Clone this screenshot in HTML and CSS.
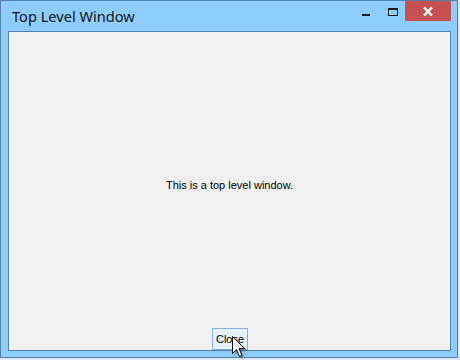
FILE: index.html
```html
<!DOCTYPE html>
<html>
<head>
<meta charset="utf-8">
<link rel="stylesheet" href="styles.css">
</head>
<body>
<div class="window">
  <div class="titlebar">
    <div class="title">Top Level Window</div>
    <div class="controls">
      <div class="btn-min"><span class="dash"></span></div>
      <div class="btn-max"><span class="box"></span></div>
      <div class="btn-close">
        <svg width="10" height="9" viewBox="0 0 10 9"><path d="M1 0.5 L9 8.5 M9 0.5 L1 8.5" stroke="#fff" stroke-width="2.4" fill="none"/></svg>
      </div>
    </div>
  </div>
  <div class="client">
    <div class="label-area"><span class="label">This is a top level window.</span></div>
    <div class="button-row"><button class="close-btn">Close</button></div>
  </div>
</div>
<svg class="cursor" width="16" height="24" viewBox="0 0 16 24">
  <defs>
    <filter id="sh" x="-50%" y="-50%" width="200%" height="200%">
      <feGaussianBlur stdDeviation="0.9"/>
    </filter>
  </defs>
  <path d="M2.5 2.5 L2.5 19.5 L6.5 15.5 L9.5 22.5 L12 21.5 L9 14.5 L14.5 14.5 Z" fill="#000" opacity="0.35" filter="url(#sh)"/>
  <path d="M0.5 0.5 L0.5 17.5 L4.5 13.5 L7.5 20.5 L10 19.5 L7 12.5 L12.5 12.5 Z" fill="#fff" stroke="#000" stroke-width="1" stroke-linejoin="miter"/>
</svg>
</body>
</html>
```
FILE: styles.css
```css
html, body {
  margin: 0;
  padding: 0;
}
body {
  width: 460px;
  height: 360px;
  background: #dce9f5;
  position: relative;
  overflow: hidden;
}
.window {
  width: 456px;
  height: 356px;
  border: 1px solid #557fa3;
  background: #8ccdfe;
  display: flex;
  flex-direction: column;
}
.titlebar {
  height: 30px;
  display: flex;
  justify-content: space-between;
  align-items: flex-start;
}
.title {
  font-family: "Noto Sans", sans-serif;
  font-size: 14.6px;
  color: #141414;
  margin-left: 11px;
  margin-top: 5px;
  line-height: 20px;
}
.controls {
  display: flex;
  margin-right: 6px;
}
.btn-min, .btn-max {
  position: relative;
  width: 25px;
  height: 20px;
}
.btn-min { width: 26px; }
.dash {
  position: absolute;
  left: 0px;
  top: 13px;
  width: 8px;
  height: 2px;
  background: #1a1a1a;
}
.btn-max { width: 17px; }
.box {
  position: absolute;
  left: 0;
  top: 7px;
  width: 8px;
  height: 5px;
  border: 1px solid #1a1a1a;
  border-top-width: 2px;
}
.btn-close {
  width: 46px;
  height: 20px;
  background: #c75050;
  display: flex;
  align-items: center;
  justify-content: center;
}
.btn-close svg { display: block; margin-top: 1px; }
.client {
  margin: 0 6px 6px 7px;
  flex: 1;
  border: 1px solid #557fa3;
  background: #f0f0f0;
  display: flex;
  flex-direction: column;
}
.label-area {
  flex: 1;
  display: flex;
  align-items: center;
  justify-content: center;
  padding-top: 10px;
}
.label {
  font-family: "Liberation Sans", Arial, sans-serif;
  font-size: 11px;
  color: #000;
}
.button-row {
  display: flex;
  justify-content: center;
  padding-left: 1px;
}
.close-btn {
  width: 36px;
  height: 22px;
  margin: 0;
  padding: 0;
  border: 1px solid #7eb4ea;
  background: #e5f1fb;
  font-family: "Liberation Sans", Arial, sans-serif;
  font-size: 11px;
  color: #000;
}
.cursor {
  position: absolute;
  left: 232px;
  top: 336px;
}
```
